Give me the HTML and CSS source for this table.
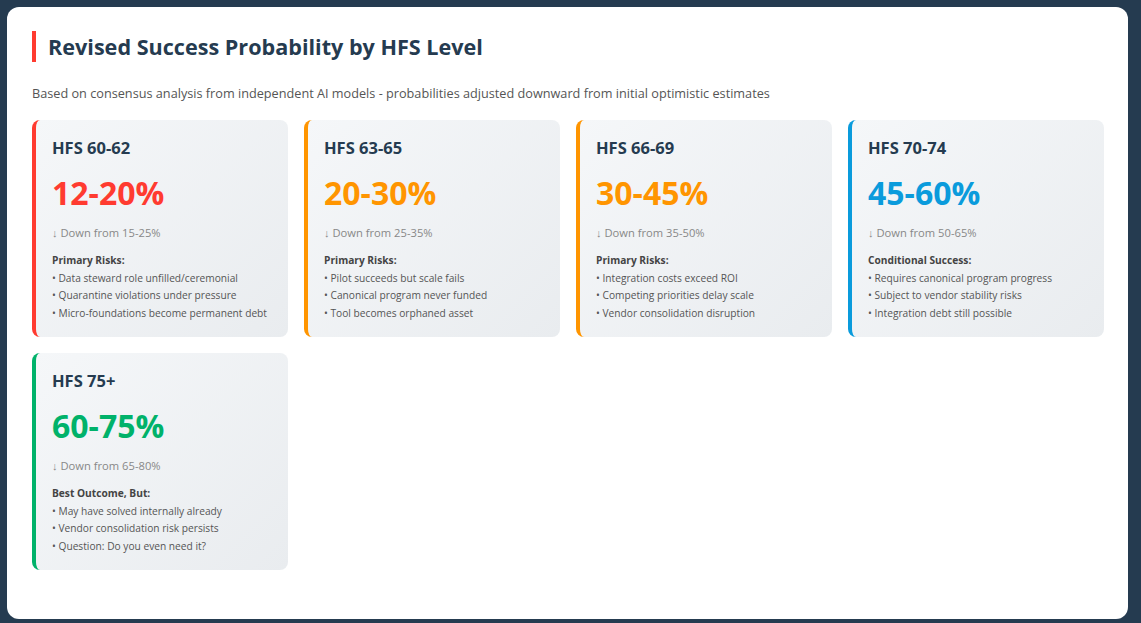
FILE: index.html
```html
<!DOCTYPE html>
<html lang="en">
<head>
<meta charset="utf-8">
<title>Revised Success Probability by HFS Level</title>
<link rel="stylesheet" href="styles.css">
</head>
<body>
<main class="panel">
  <h1 class="title">Revised Success Probability by HFS Level</h1>
  <p class="subtitle">Based on consensus analysis from independent AI models - probabilities adjusted downward from initial optimistic estimates</p>
  <section class="grid">
    <article class="card card-red">
      <h2 class="card-title">HFS 60-62</h2>
      <div class="pct">12-20%</div>
      <div class="down">↓ Down from 15-25%</div>
      <div class="label">Primary Risks:</div>
      <ul class="list">
        <li>• Data steward role unfilled/ceremonial</li>
        <li>• Quarantine violations under pressure</li>
        <li>• Micro-foundations become permanent debt</li>
      </ul>
    </article>
    <article class="card card-orange">
      <h2 class="card-title">HFS 63-65</h2>
      <div class="pct">20-30%</div>
      <div class="down">↓ Down from 25-35%</div>
      <div class="label">Primary Risks:</div>
      <ul class="list">
        <li>• Pilot succeeds but scale fails</li>
        <li>• Canonical program never funded</li>
        <li>• Tool becomes orphaned asset</li>
      </ul>
    </article>
    <article class="card card-orange">
      <h2 class="card-title">HFS 66-69</h2>
      <div class="pct">30-45%</div>
      <div class="down">↓ Down from 35-50%</div>
      <div class="label">Primary Risks:</div>
      <ul class="list">
        <li>• Integration costs exceed ROI</li>
        <li>• Competing priorities delay scale</li>
        <li>• Vendor consolidation disruption</li>
      </ul>
    </article>
    <article class="card card-blue">
      <h2 class="card-title">HFS 70-74</h2>
      <div class="pct">45-60%</div>
      <div class="down">↓ Down from 50-65%</div>
      <div class="label">Conditional Success:</div>
      <ul class="list">
        <li>• Requires canonical program progress</li>
        <li>• Subject to vendor stability risks</li>
        <li>• Integration debt still possible</li>
      </ul>
    </article>
    <article class="card card-green">
      <h2 class="card-title">HFS 75+</h2>
      <div class="pct">60-75%</div>
      <div class="down">↓ Down from 65-80%</div>
      <div class="label">Best Outcome, But:</div>
      <ul class="list">
        <li>• May have solved internally already</li>
        <li>• Vendor consolidation risk persists</li>
        <li>• Question: Do you even need it?</li>
      </ul>
    </article>
  </section>
</main>
</body>
</html>
```

FILE: styles.css
```css
* { box-sizing: border-box; }
html, body { margin: 0; padding: 0; }
body {
  background: #253b50;
  padding: 7px 13px 0 7px;
  font-family: "Open Sans", "Noto Sans", sans-serif;
  height: 623px;
  overflow: hidden;
}
.panel {
  background: #ffffff;
  border-radius: 12px;
  padding: 24px 24px 40px 25px;
  height: 612px;
}
.title {
  margin: 0;
  border-left: 4px solid #ff3b30;
  padding-left: 12px;
  font-size: 21.6px;
  line-height: 31px;
  font-weight: 700;
  color: #253b50;
}
.subtitle {
  margin: 22px 0 0;
  font-size: 12.7px;
  line-height: 18px;
  color: #555;
}
.grid {
  margin-top: 18px;
  display: grid;
  grid-template-columns: repeat(4, 256px);
  gap: 16px;
}
.card {
  border-left: 4px solid #ff3b30;
  border-radius: 8px;
  background: linear-gradient(135deg, #f5f7f9 0%, #e9ecef 100%);
  padding: 18px 16px 15px 16px;
  color: #555;
}
.card-red { border-left-color: #ff3b30; }
.card-red .pct { color: #ff3b30; }
.card-orange { border-left-color: #ff9500; }
.card-orange .pct { color: #ff9500; }
.card-blue { border-left-color: #0a9bdc; }
.card-blue .pct { color: #0a9bdc; }
.card-green { border-left-color: #00b26a; }
.card-green .pct { color: #00b26a; }
.card-title {
  margin: 0;
  font-size: 16.5px;
  line-height: 20px;
  font-weight: 700;
  color: #253b50;
}
.pct {
  margin-top: 16px;
  font-size: 32px;
  line-height: 38px;
  font-weight: 700;
}
.down {
  margin-top: 13px;
  font-size: 11.2px;
  line-height: 16px;
  color: #888;
}
.label {
  margin-top: 11px;
  font-size: 10.2px;
  line-height: 17.5px;
  font-weight: 700;
  color: #444;
}
.list {
  list-style: none;
  margin: 0;
  padding: 0;
  font-size: 10.2px;
  line-height: 17.5px;
  color: #555;
}
```
